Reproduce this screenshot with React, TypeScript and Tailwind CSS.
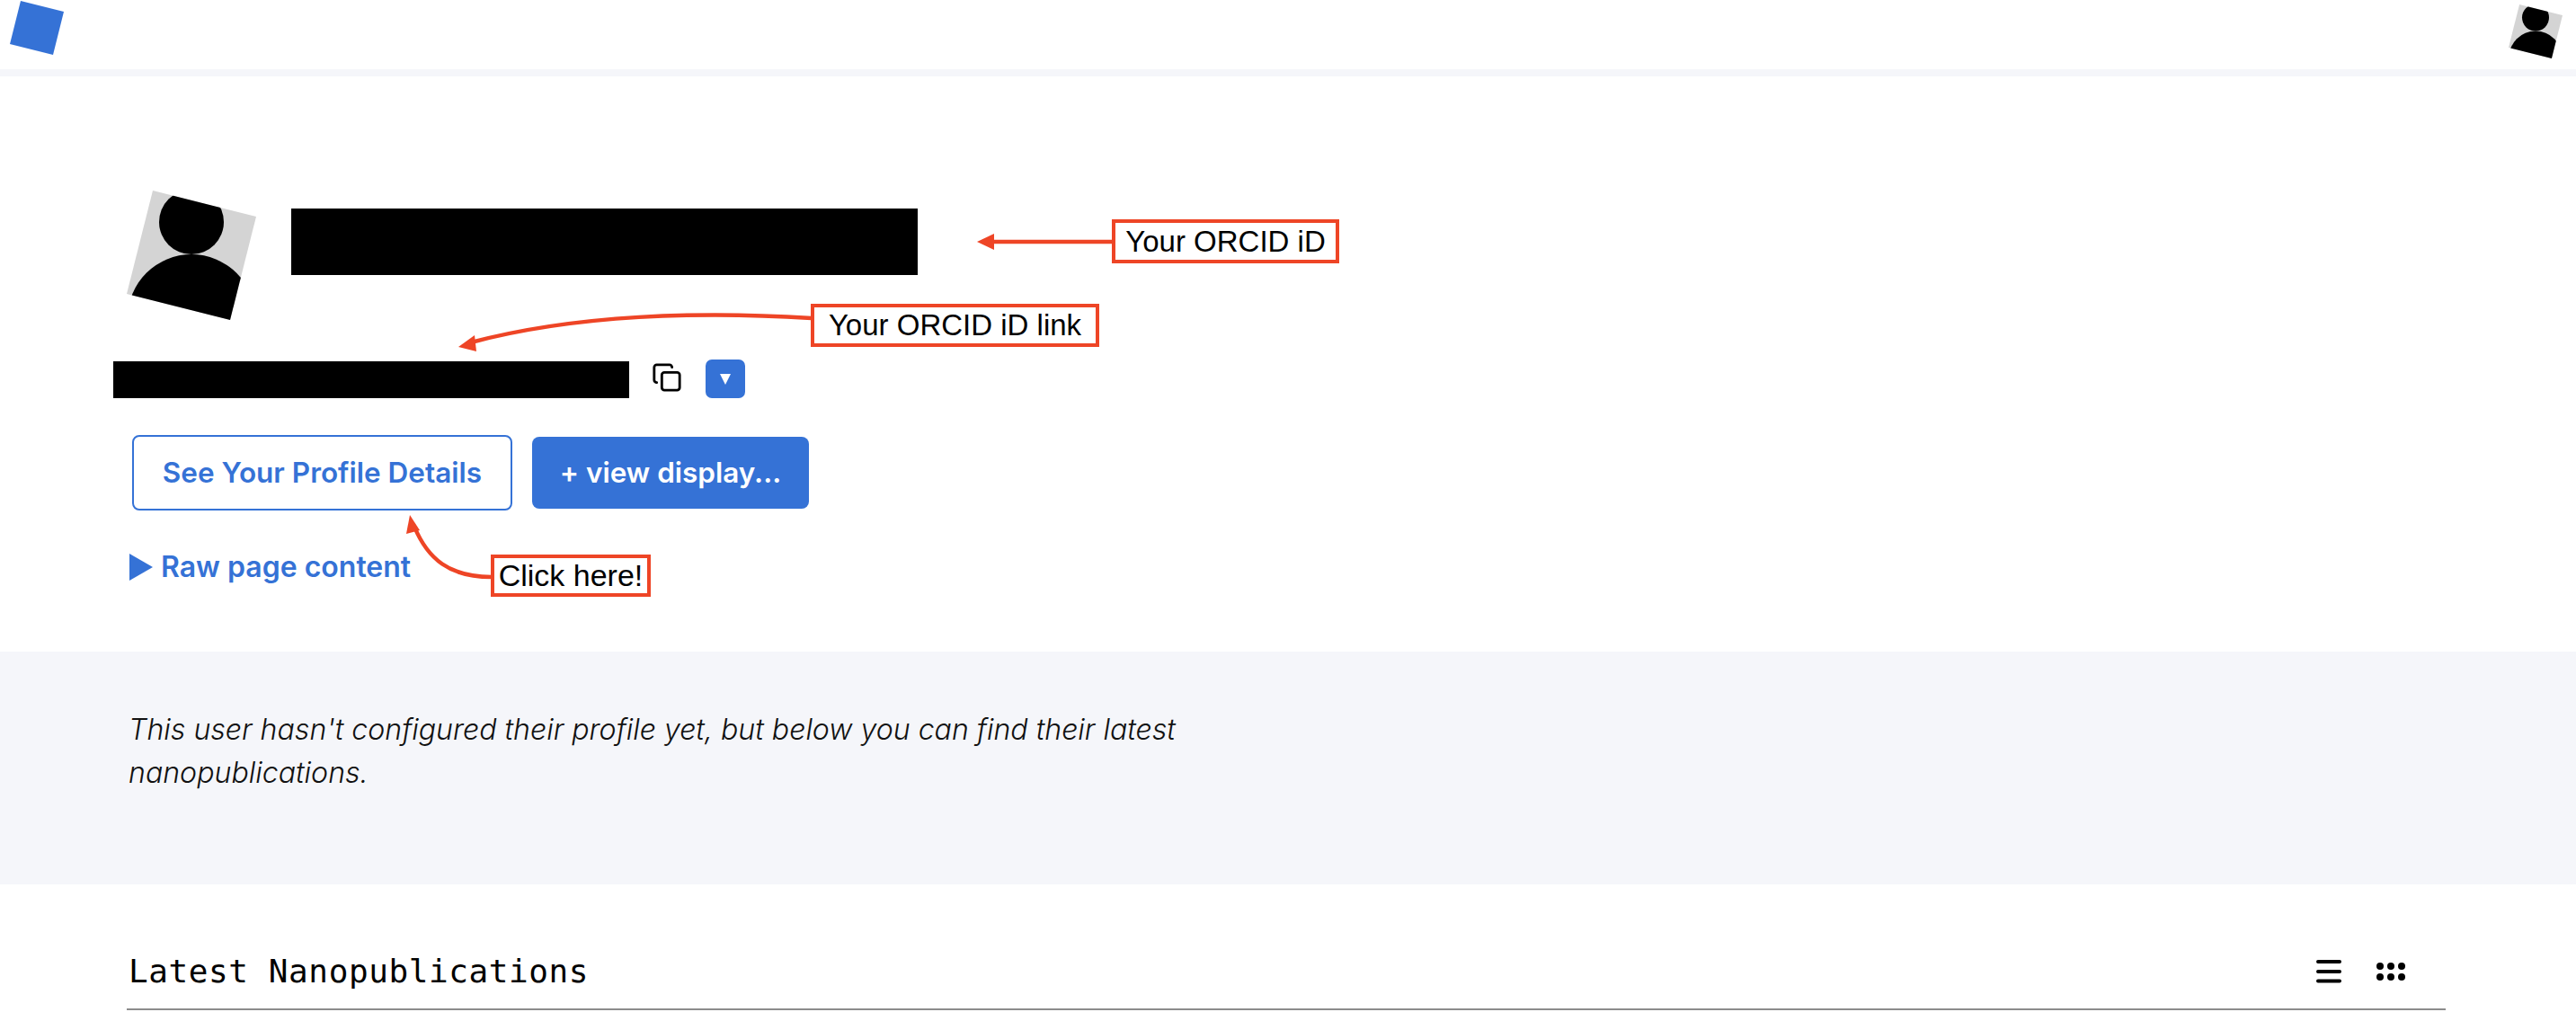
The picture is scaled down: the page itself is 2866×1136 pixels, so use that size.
import { Copy } from "lucide-react";

const BLUE = "#3572d6";
const RED = "#ee4526";

function Avatar({ size }: { size: number }) {
  // artwork stays upright, only the grey square clip is tilted
  return (
    <svg width={size} height={size} viewBox="141 212 144 144" className="shrink-0">
      <defs>
        <clipPath id={`avatar-clip-${size}`}>
          <polygon points="170,212 285,241 256,356 141,327" />
        </clipPath>
      </defs>
      <g clipPath={`url(#avatar-clip-${size})`}>
        <rect x="141" y="212" width="144" height="144" fill="#d4d4d4" />
        <circle cx="213" cy="247" r="36" fill="#000" />
        <circle cx="213" cy="354" r="71" fill="#000" />
      </g>
    </svg>
  );
}

function Callout({ className, children }: { className: string; children: string }) {
  return (
    <div
      className={`absolute flex items-center justify-center border-4 border-[#ee4526] bg-white whitespace-nowrap text-black font-['Liberation_Sans',sans-serif] ${className}`}
    >
      {children}
    </div>
  );
}

function Arrows() {
  return (
    <svg width="2866" height="1136" viewBox="0 0 2866 1136" className="pointer-events-none absolute top-0 left-0" fill="none">
      <path d="M1238 269H1102" stroke={RED} strokeWidth="4.500" />
      <polygon points="1087,269 1106,260 1106,278" fill={RED} />
      <path d="M903 354C780 346 640 350 524 381" stroke={RED} strokeWidth="4.500" />
      <polygon points="510,386 528,373 530,391" fill={RED} />
      <path d="M547 642C500 642 476 622 461 586" stroke={RED} strokeWidth="4.500" />
      <polygon points="456,573 467,590 452,594" fill={RED} />
    </svg>
  );
}

export default function App() {
  return (
    <div className="relative h-[1136px] w-[2866px] overflow-hidden bg-white text-black font-['Inter',sans-serif]">
      <header className="flex h-[85px] items-start justify-between border-b-[8px] border-[#f5f6fa] pt-px pr-[15px] pl-[11px]">
        <svg width="60" height="60" viewBox="11 1 60 60">
          <polygon points="23,1 71,13 59,61 11,49" fill={BLUE} />
        </svg>
        <div className="mt-1">
          <Avatar size={60} />
        </div>
      </header>

      <section className="flex h-[640px] flex-col pt-[127px]">
        <div className="ml-[141px] flex items-start">
          <Avatar size={144} />
          <div className="mt-5 ml-[39px] h-[74px] w-[697px] bg-black" />
        </div>

        <div className="mt-[44px] ml-[126px] flex items-start">
          <div className="mt-0.5 h-[41px] w-[574px] bg-black" />
          <Copy size={34} strokeWidth={2} className="mt-[3px] ml-[25px] text-black" />
          <button type="button" className="ml-[26px] flex h-[43px] w-11 items-center justify-center rounded-[7px] bg-[#3572d6]">
            <svg width="12" height="12" viewBox="0 0 12 12">
              <polygon points="0,0 12,0 6,12" fill="#fff" />
            </svg>
          </button>
        </div>

        <div className="mt-[41px] ml-[147px] flex items-center gap-[22px]">
          <button
            type="button"
            className="h-[84px] w-[423px] rounded-lg border-2 border-[#3572d6] bg-white text-[31.500px] font-semibold text-[#3572d6]"
          >
            See Your Profile Details
          </button>
          <button type="button" className="h-20 w-[308px] rounded-lg bg-[#3572d6] text-[31.500px] font-semibold text-white">
            + view display...
          </button>
        </div>

        <div className="mt-[47px] ml-[144px] flex items-center gap-[9px] text-[32px] leading-[32px] font-semibold text-[#3572d6]">
          <svg width="26" height="30" viewBox="0 0 26 30">
            <polygon points="0,0 26,15 0,30" fill={BLUE} />
          </svg>
          <span>Raw page content</span>
        </div>
      </section>

      <section className="h-[259px] bg-[#f5f6fa] pt-[63px] pl-[143px]">
        <p className="w-[1200px] text-[32.100px] leading-[48px] font-light text-[#111] italic">
          This user hasn't configured their profile yet, but below you can find their latest nanopublications.
        </p>
      </section>

      <div className="ml-[141px] flex h-[140px] w-[2580px] items-center justify-between border-b-2 border-[#8c8c8c] pt-[80px] pr-[45px] pb-[24px] pl-0.5">
        <h2 className="text-[36px] font-normal tracking-[0.59px] font-['DejaVu_Sans_Mono',monospace]">Latest Nanopublications</h2>
        <div className="flex items-center gap-[39px]">
          <svg width="28" height="28" viewBox="0 0 28 28" fill="none" stroke="#000" strokeWidth="4" strokeLinecap="round">
            <path d="M2 3H26M2 14H26M2 24.500H26" />
          </svg>
          <svg width="32" height="20" viewBox="0 0 32 20" fill="#000">
            <circle cx="4" cy="4" r="4" />
            <circle cx="16" cy="4" r="4" />
            <circle cx="28" cy="4" r="4" />
            <circle cx="4" cy="16" r="4" />
            <circle cx="16" cy="16" r="4" />
            <circle cx="28" cy="16" r="4" />
          </svg>
        </div>
      </div>

      <Arrows />
      <Callout className="top-[244px] left-[1237px] h-[49px] w-[253px] text-[33px]">Your ORCID iD</Callout>
      <Callout className="top-[338px] left-[902px] h-[48px] w-[321px] text-[33px]">Your ORCID iD link</Callout>
      <Callout className="top-[617px] left-[546px] h-[47px] w-[178px] text-[34px]">Click here!</Callout>
    </div>
  );
}
